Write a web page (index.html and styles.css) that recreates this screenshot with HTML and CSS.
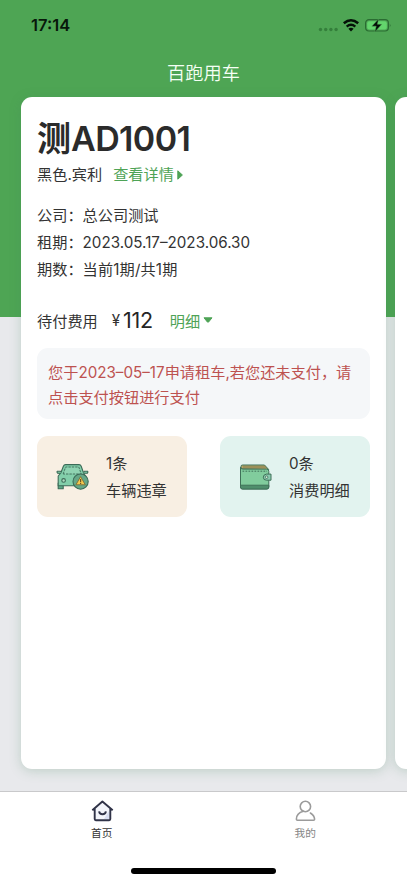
FILE: index.html
```html
<!DOCTYPE html>
<html lang="zh-CN">
<head>
<meta charset="utf-8">
<meta name="viewport" content="width=device-width, initial-scale=1">
<title>百跑用车</title>
<link rel="stylesheet" href="styles.css">
</head>
<body>
<div class="app">
  <header class="status">
    <span class="time">17:14</span>
    <svg class="signals" width="76" height="16" viewBox="0 0 76 16">
      <g fill="#347f3b"><circle cx="4.5" cy="12.5" r="1.7"/><circle cx="9.7" cy="12.5" r="1.7"/><circle cx="14.9" cy="12.5" r="1.7"/><circle cx="20.1" cy="12.5" r="1.7"/></g>
      <g fill="none" stroke="#041007" stroke-width="2.5"><path d="M27.8 6.3Q35 .3 42.2 6.3"/><path d="M30.7 9.6Q35 6 39.3 9.6"/></g>
      <path d="M32.4 11.7Q35 9.8 37.6 11.7L35 14.4Z" fill="#041007"/>
      <rect x="49.6" y="2.6" width="22.8" height="11.4" rx="3.4" fill="none" stroke="#2a6c32" stroke-width="1.2"/>
      <rect x="51.2" y="4.2" width="19.6" height="8.2" rx="2" fill="#63d56c"/>
      <path d="M73.8 6.4Q75.4 8.3 73.8 10.2Z" fill="#2a6c32"/>
      <path d="M62.6 1.9L55.8 9.2H60.2L58.8 14.9L65.8 7.3H61.4Z" fill="#041007" stroke="#4ea554" stroke-width=".5"/>
    </svg>
  </header>
  <h1 class="nav-title">百跑用车</h1>
  <main class="cards">
    <section class="card">
      <h2 class="plate">测<span class="plate-no">AD1001</span></h2>
      <div class="model"><span>黑色.宾利</span><a class="link">查看详情<svg width="6" height="10" viewBox="0 0 6 10"><path d="M.8.8V9.2L5.4 5Z" fill="#4ea356" stroke="#4ea356" stroke-width="1" stroke-linejoin="round"/></svg></a></div>
      <dl class="info">
        <div><dt>公司：</dt><dd>总公司测试</dd></div>
        <div><dt>租期：</dt><dd>2023.05.17–2023.06.30</dd></div>
        <div><dt>期数：</dt><dd class="terms">当前1期/共1期</dd></div>
      </dl>
      <div class="fee"><span>待付费用</span><span class="yen">¥</span><span class="amount">112</span><a class="link">明细<svg width="10" height="6" viewBox="0 0 10 6"><path d="M1 .8H9L5.6 5Q5 5.5 4.4 5Z" fill="#4ea356" stroke="#4ea356" stroke-width="1" stroke-linejoin="round"/></svg></a></div>
      <p class="notice">您于<span>2023–05–17</span>申请租车,若您还未支付，请<br>点击支付按钮进行支付</p>
      <div class="tiles">
        <div class="tile violation">
          <svg width="34" height="28" viewBox="0 0 34 28">
            <g stroke="#3c6b58" stroke-width="1.1" stroke-linejoin="round">
              <path d="M2.2 20H7.2V25.8H2.2Z" fill="#5da886"/>
              <path d="M4.8 10L7.4 3.2Q8 1.6 9.6 1.6H23Q24.6 1.6 25.2 3.2L27.6 10L29.5 13V22.8H2.2V13Z" fill="#82ceaa"/>
              <path d="M4.8 10.4L1.6 10.2Q.6 9 1.4 8.2H4.4L5.4 9.2M27.6 9.2L28.6 8.2H31.4Q32.3 9 31.4 10.2H28" fill="#82ceaa"/>
              <path d="M7.2 11L9.6 4H22.8L25.2 11Z" fill="#8fd3b2" stroke-width=".9" stroke-dasharray="2.4 1"/>
              <circle cx="7.6" cy="17.4" r="1.8" fill="#b1ddc2"/>
              <circle cx="24.6" cy="18.6" r="7.6" fill="#65a787"/>
              <path d="M24.6 13.6L29.3 21.8H19.9Z" fill="#f4c84e" stroke="#796d3a" stroke-width=".9"/>
            </g>
            <path d="M24.6 16V19.2M24.6 20V20.9" stroke="#665629" stroke-width="1.2"/>
          </svg>
          <div class="tile-text"><span>1条</span><span>车辆违章</span></div>
        </div>
        <div class="tile spending">
          <svg width="34" height="28" viewBox="0 0 34 28">
            <g stroke="#3f7058" stroke-width="1" stroke-linejoin="round">
              <path d="M2 6V3.4Q2 2 3.6 2H25.5L29.7 6.5Z" fill="#b4a265"/>
              <path d="M4 4H27" stroke="#837e4f" fill="none"/>
              <path d="M1.5 4.2Q1.5 6.1 4 6.1H27.7Q29.8 6.1 29.8 8.3V24Q29.8 26 27.8 26H3.5Q1.5 26 1.5 24Z" fill="#81cc9d"/>
              <path d="M1.5 22.2H29.8V24Q29.8 26 27.8 26H3.5Q1.5 26 1.5 24Z" fill="#4f8e6c"/>
              <path d="M3.5 8.2H28" stroke-dasharray="1.7 1.3" fill="none"/>
              <path d="M32 11.1H27.4Q24.3 11.6 24.3 14.2Q24.3 17.2 27.4 17.2H32Z" fill="#8bcbb0"/>
              <circle cx="27.6" cy="14.2" r="1.3" fill="#d5e8d8" stroke-width=".8"/>
            </g>
          </svg>
          <div class="tile-text"><span>0条</span><span>消费明细</span></div>
        </div>
      </div>
    </section>
    <section class="card"></section>
  </main>
  <nav class="tabs">
    <a class="tab active">
      <svg width="24" height="24" viewBox="0 0 24 24"><path d="M5 10V20.2Q5 21 5.8 21H19.2Q20 21 20 20.2V10L12.5 3.5Z" fill="#f3f5fb"/><path d="M14 20L19 12V20Z" fill="#d8def2"/><path d="M2.3 11.2L12.4 2.5L22.7 11.2M4.7 9.8V20.1Q4.7 21.2 5.8 21.2H19.2Q20.3 21.2 20.3 20.1V9.8M9.1 12.4Q9.5 15.3 12.5 15.3T15.9 12.4" fill="none" stroke="#303348" stroke-width="1.9" stroke-linejoin="round"/></svg>
      <span>首页</span>
    </a>
    <a class="tab">
      <svg width="24" height="24" viewBox="0 0 24 24"><circle cx="12.4" cy="7.5" r="5.2" fill="none" stroke="#9b9b9b" stroke-width="1.6"/><path d="M10.4 12.3Q3.4 14.2 3.4 20.2Q3.4 21.2 4.4 21.2H20.6Q21.6 21.2 21.6 20.2Q21.4 16.6 17.4 14" fill="none" stroke="#9b9b9b" stroke-width="1.6" stroke-linecap="round"/></svg>
      <span>我的</span>
    </a>
  </nav>
  <div class="home-bar"></div>
</div>
</body>
</html>
```

FILE: styles.css
```css
* { box-sizing: border-box; margin: 0; padding: 0; }
body {
  font-family: Inter, "Noto Sans CJK SC", sans-serif;
  font-size: 15.2px;
  color: #333;
  overflow: hidden;
}
svg { display: block; flex: none; }
.app {
  width: 407px;
  height: 883px;
  display: flex;
  flex-direction: column;
  overflow: hidden;
  background: linear-gradient(#4ea554 317px, #e8e9ec 317px);
}
.status {
  height: 50px;
  padding: 0 15px 0 31px;
  display: flex;
  align-items: center;
  justify-content: space-between;
  flex: none;
}
.time { font-size: 16.5px; font-weight: 600; color: #07180a; }
.nav-title {
  height: 47px;
  line-height: 46px;
  font-size: 18.2px;
  font-weight: 350;
  color: #f5fff5;
  text-align: center;
  flex: none;
}
.cards {
  flex: 1;
  min-height: 0;
  padding: 0 0 22px 21px;
  display: flex;
  gap: 9px;
}
.card {
  width: 365px;
  flex: none;
  padding: 18px 16px;
  border-radius: 11px;
  background: #fff;
  box-shadow: 0 2px 12px rgba(66, 130, 90, .25);
}
.plate { font-size: 34px; line-height: 48px; font-weight: 600; color: #2b2b2b; white-space: nowrap; }
.plate-no { letter-spacing: -.6px; }
.model { display: flex; gap: 11px; height: 26px; line-height: 24px; }
.link { display: flex; align-items: center; gap: 3px; color: #4ea356; }
.model .link { height: 24px; }
.info { margin-top: 13px; }
.info div { display: flex; height: 27px; line-height: 27px; }
.terms { letter-spacing: .15px; }
.fee { display: flex; align-items: center; height: 26px; margin-top: 24px; white-space: nowrap; }
.yen { margin-left: 14px; }
.amount { margin-left: 3px; font-size: 21.5px; letter-spacing: -.3px; color: #252525; }
.fee .link { margin-left: 17px; }
.notice {
  height: 71px;
  margin-top: 15px;
  padding: 12px 11px 10px;
  border-radius: 11px;
  background: #f5f7f9;
  color: #bd5250;
  line-height: 25px;
  white-space: nowrap;
}
.tiles { display: flex; justify-content: space-between; margin-top: 17px; }
.tile {
  width: 150px;
  height: 81px;
  padding-left: 19px;
  border-radius: 11px;
  display: flex;
  align-items: center;
  gap: 16px;
}
.violation { background: #f8efe3; }
.spending { background: #e2f3ef; }
.tile-text { display: flex; flex-direction: column; line-height: 27px; }
.tabs {
  height: 92px;
  flex: none;
  display: flex;
  background: #fff;
  border-top: 1px solid #c9c9cb;
}
.tab {
  flex: 1;
  padding-top: 7px;
  display: flex;
  flex-direction: column;
  align-items: center;
  gap: 2px;
  font-size: 10.7px;
  line-height: 17px;
  color: #858585;
}
.tab.active { color: #333; }
.home-bar {
  position: absolute;
  left: 131px;
  top: 868px;
  width: 145px;
  height: 6px;
  border-radius: 3px;
  background: #000;
}
```
